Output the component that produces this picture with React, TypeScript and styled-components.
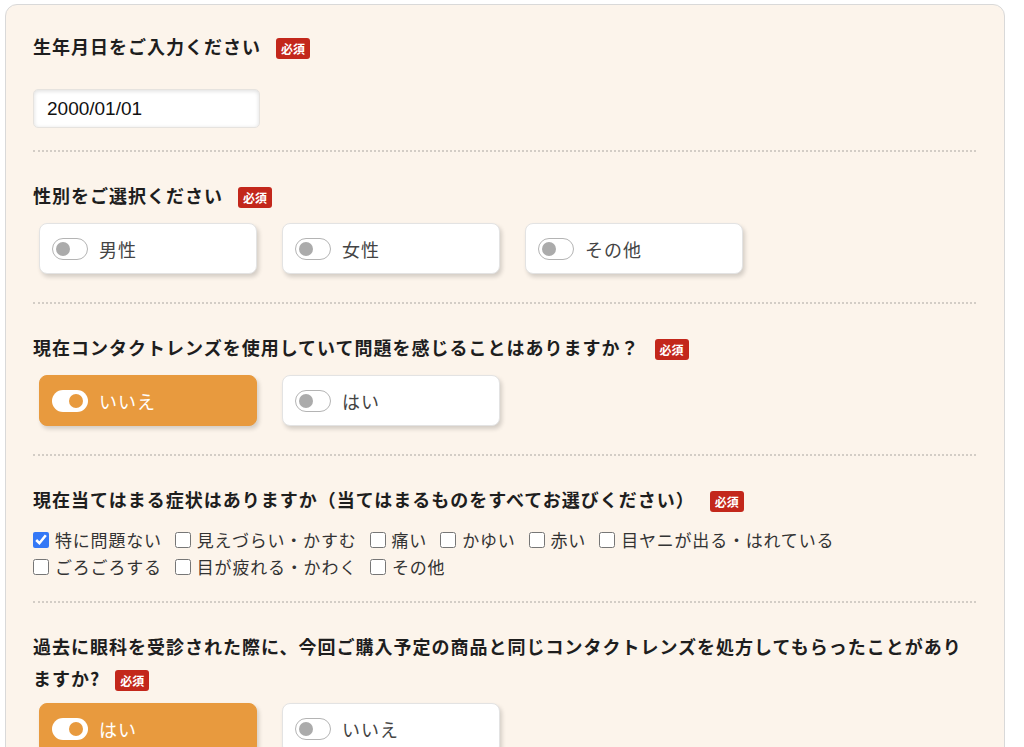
import React from "react";
import styled, { createGlobalStyle } from "styled-components";

const GlobalStyle = createGlobalStyle`
  html, body {
    margin: 0;
    padding: 0;
    background: #fff;
    font-family: "Noto Sans CJK JP", "Noto Sans", sans-serif;
  }
`;

const Page = styled.div`
  padding: 4px 19px 0 5px;
`;

const Card = styled.div`
  background: #fcf4eb;
  border: 1px solid #d9d9d9;
  border-radius: 12px;
  padding: 0 28px 0 27px;
  min-height: 760px;
`;

const Section = styled.section<{ $bottom?: number }>`
  padding: 27px 0 ${(p) => p.$bottom ?? 28}px;
  border-bottom: 2px dotted #d3cdc6;

  &:first-child {
    padding-top: 25px;
  }
`;

const Heading = styled.h2`
  margin: 0;
  font-size: 18px;
  line-height: 32px;
  letter-spacing: 1px;
  font-weight: 700;
  color: #1e1e1e;
`;

const Badge = styled.span`
  display: inline-block;
  margin-left: 15px;
  width: 34px;
  height: 21px;
  line-height: 21px;
  border-radius: 3px;
  background: #c3271b;
  color: #fff;
  font-size: 12px;
  font-weight: 700;
  letter-spacing: 0;
  text-align: center;
`;

const DateInput = styled.input`
  display: block;
  margin-top: 27px;
  width: 227px;
  height: 39px;
  box-sizing: border-box;
  padding: 0 13px;
  border: 1px solid #e6e3df;
  border-radius: 5px;
  background: #fff;
  box-shadow: inset 0 1px 4px rgba(0, 0, 0, 0.14);
  font-family: "Liberation Sans", Arial, sans-serif;
  font-size: 19px;
  color: #111;
`;

const Choices = styled.div<{ $top?: number }>`
  display: flex;
  gap: 25px;
  margin-top: ${(p) => p.$top ?? 12}px;
  padding-left: 6px;
`;

const Choice = styled.label<{ $on: boolean }>`
  display: flex;
  align-items: center;
  gap: 11px;
  width: 218px;
  height: 51px;
  box-sizing: border-box;
  padding-left: 12px;
  border-radius: 8px;
  border: 1px solid ${(p) => (p.$on ? "#e89a3e" : "#e3e3e3")};
  background: ${(p) => (p.$on ? "#e89a3e" : "#fff")};
  box-shadow: 2px 3px 4px rgba(0, 0, 0, 0.16);
  color: ${(p) => (p.$on ? "#fff" : "#444")};
  font-size: 18px;
  letter-spacing: 1px;
  cursor: pointer;
`;

const Track = styled.span<{ $on: boolean }>`
  position: relative;
  width: 36px;
  height: 22px;
  box-sizing: border-box;
  border-radius: 11px;
  border: ${(p) => (p.$on ? "none" : "1.5px solid #b4b4b4")};
  background: #fff;
  flex-shrink: 0;

  &::after {
    content: "";
    position: absolute;
    top: 50%;
    transform: translateY(-50%);
    ${(p) => (p.$on ? "right: 5px;" : "left: 3px;")}
    width: 14px;
    height: 14px;
    border-radius: 50%;
    background: ${(p) => (p.$on ? "#e89a3e" : "#ababab")};
  }
`;

const Checks = styled.div`
  display: flex;
  flex-wrap: wrap;
  column-gap: 13px;
  margin-top: 11px;
  max-width: 850px;
`;

const Check = styled.label`
  display: flex;
  align-items: center;
  gap: 6px;
  height: 27px;
  font-size: 17px;
  letter-spacing: 0.8px;
  color: #333;

  input {
    margin: 0;
    width: 16px;
    height: 16px;
    accent-color: #3478f6;
  }
`;

type Opt = { label: string; on?: boolean };

const Toggles = ({ items, top }: { items: Opt[]; top?: number }) => (
  <Choices $top={top}>
    {items.map((o) => (
      <Choice key={o.label} $on={!!o.on}>
        <Track $on={!!o.on} />
        {o.label}
      </Choice>
    ))}
  </Choices>
);

const symptoms = [
  "特に問題ない",
  "見えづらい・かすむ",
  "痛い",
  "かゆい",
  "赤い",
  "目ヤニが出る・はれている",
  "ごろごろする",
  "目が疲れる・かわく",
  "その他",
];

export default function App() {
  return (
    <Page>
      <GlobalStyle />
      <Card>
        <Section $bottom={22}>
          <Heading>
            生年月日をご入力ください<Badge>必須</Badge>
          </Heading>
          <DateInput defaultValue="2000/01/01" />
        </Section>

        <Section>
          <Heading>
            性別をご選択ください<Badge>必須</Badge>
          </Heading>
          <Toggles items={[{ label: "男性" }, { label: "女性" }, { label: "その他" }]} />
        </Section>

        <Section>
          <Heading>
            現在コンタクトレンズを使用していて問題を感じることはありますか？<Badge>必須</Badge>
          </Heading>
          <Toggles items={[{ label: "いいえ", on: true }, { label: "はい" }]} />
        </Section>

        <Section $bottom={21}>
          <Heading>
            現在当てはまる症状はありますか（当てはまるものをすべてお選びください）<Badge>必須</Badge>
          </Heading>
          <Checks>
            {symptoms.map((s, i) => (
              <Check key={s}>
                <input type="checkbox" defaultChecked={i === 0} />
                {s}
              </Check>
            ))}
          </Checks>
        </Section>

        <Section>
          <Heading>
            過去に眼科を受診された際に、今回ご購入予定の商品と同じコンタクトレンズを処方してもらったことがありますか?
            <Badge>必須</Badge>
          </Heading>
          <Toggles top={9} items={[{ label: "はい", on: true }, { label: "いいえ" }]} />
        </Section>
      </Card>
    </Page>
  );
}
